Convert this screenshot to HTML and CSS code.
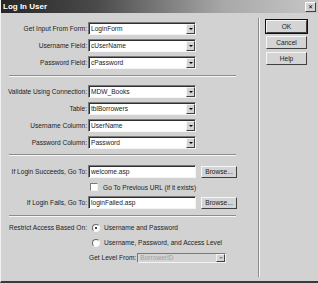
FILE: index.html
```html
<!DOCTYPE html>
<html>
<head>
    <title>Log In User</title>
    <link rel="stylesheet" href="styles.css">
</head>
<body>
    <div class="window">
        <div class="titlebar">
            <span class="title">Log In User</span>
            <span class="close">&#x2715;</span>
        </div>
        <div class="content">
            <div class="main">
                <div class="section first">
                    <div class="row">
                        <label>Get Input From Form:</label>
                        <div class="select"><span>LoginForm</span><i class="arrow"></i></div>
                    </div>
                    <div class="row">
                        <label>Username Field:</label>
                        <div class="select"><span>cUserName</span><i class="arrow"></i></div>
                    </div>
                    <div class="row">
                        <label>Password Field:</label>
                        <div class="select"><span>cPassword</span><i class="arrow"></i></div>
                    </div>
                </div>
                <div class="sep sep1"></div>
                <div class="section">
                    <div class="row">
                        <label>Validate Using Connection:</label>
                        <div class="select"><span>MDW_Books</span><i class="arrow"></i></div>
                    </div>
                    <div class="row">
                        <label>Table:</label>
                        <div class="select"><span>tblBorrowers</span><i class="arrow"></i></div>
                    </div>
                    <div class="row">
                        <label>Username Column:</label>
                        <div class="select"><span>UserName</span><i class="arrow"></i></div>
                    </div>
                    <div class="row">
                        <label>Password Column:</label>
                        <div class="select"><span>Password</span><i class="arrow"></i></div>
                    </div>
                </div>
                <div class="sep sep2"></div>
                <div class="section">
                    <div class="row">
                        <label>If Login Succeeds, Go To:</label>
                        <div class="textbox">welcome.asp</div>
                        <button class="browse">Browse...</button>
                    </div>
                    <div class="row check-row">
                        <span class="checkbox"></span>
                        <span class="check-label">Go To Previous URL (if it exists)</span>
                    </div>
                    <div class="row">
                        <label>If Login Fails, Go To:</label>
                        <div class="textbox">loginFailed.asp</div>
                        <button class="browse">Browse...</button>
                    </div>
                </div>
                <div class="sep sep3"></div>
                <div class="section">
                    <div class="row small">
                        <label>Restrict Access Based On:</label>
                        <span class="radio checked"></span>
                        <span class="radio-label">Username and Password</span>
                    </div>
                    <div class="row small">
                        <label></label>
                        <span class="radio"></span>
                        <span class="radio-label">Username, Password, and Access Level</span>
                    </div>
                    <div class="row small">
                        <span class="level-label">Get Level From:</span>
                        <div class="select disabled"><span>BorrowerID</span><i class="arrow"></i></div>
                    </div>
                </div>
            </div>
            <div class="vsep"></div>
            <div class="buttons">
                <button class="btn default">OK</button>
                <button class="btn">Cancel</button>
                <button class="btn">Help</button>
            </div>
        </div>
    </div>
</body>
</html>
```

FILE: styles.css
```css
body {
  margin: 0;
  padding: 0;
  font-family: "Liberation Sans", Arial, sans-serif;
  font-size: 6.6px;
  color: #222222;
  background-color: #d2d2d2;
  white-space: nowrap;
}

.window {
  width: 318px;
  height: 283px;
  box-sizing: border-box;
  background-color: #d2d2d2;
  border-left: 1px solid #f2f2f2;
  border-bottom: 2px solid #3a3a3a;
  display: flex;
  flex-direction: column;
}

.titlebar {
  height: 13px;
  display: flex;
  align-items: center;
  justify-content: space-between;
  padding: 0 2px 0 2px;
  background: linear-gradient(to right, #262626 0%, #4a4a4a 30%, #a8a8a8 70%, #c6c6c6 100%);
}

.title {
  color: #ffffff;
  font-weight: bold;
  font-size: 8px;
}

.close {
  width: 9px;
  height: 8px;
  font-size: 6px;
  line-height: 8px;
  text-align: center;
  background-color: #d4d4d4;
  border: 1px solid;
  border-color: #ffffff #404040 #404040 #ffffff;
  color: #000000;
}

.content {
  flex: 1;
  display: flex;
}

.main {
  width: 248px;
  padding-left: 7px;
}

.section.first {
  margin-top: 7px;
}

.row {
  display: flex;
  align-items: center;
  height: 17px;
}

.row.small {
  height: 15px;
}

.row label {
  width: 79px;
  display: flex;
  justify-content: flex-end;
  padding-right: 1px;
  flex-shrink: 0;
}

.select,
.textbox {
  width: 108px;
  height: 13px;
  box-sizing: border-box;
  background-color: #ffffff;
  border: 1px solid;
  border-color: #7a7a7a #f4f4f4 #f4f4f4 #7a7a7a;
  box-shadow: inset 1px 1px 0 #303030;
  display: flex;
  align-items: center;
  padding-left: 2px;
}

.select span {
  flex: 1;
}

.arrow {
  width: 9px;
  height: 10px;
  box-sizing: border-box;
  background-color: #d4d4d4;
  border: 1px solid;
  border-color: #f4f4f4 #404040 #404040 #f4f4f4;
  display: flex;
  align-items: center;
  justify-content: center;
}

.arrow::after {
  content: "";
  border-left: 2px solid transparent;
  border-right: 2px solid transparent;
  border-top: 2px solid #000000;
}

.select.disabled {
  width: 89px;
  height: 10px;
  background-color: #d4d4d4;
  color: #a0a0a0;
  box-shadow: none;
}

.select.disabled .arrow {
  height: 8px;
}

.select.disabled .arrow::after {
  border-top-color: #8a8a8a;
}

.level-label {
  margin-left: 81px;
  padding-right: 1px;
}

.sep {
  width: 227px;
  height: 0;
  border-top: 1px solid #8c8c8c;
  border-bottom: 1px solid #f6f6f6;
}

.sep1 {
  margin: 4px 0 6px 1px;
}

.sep2 {
  margin: 3px 0 7px 1px;
}

.sep3 {
  margin: 4px 0 3px 1px;
}

.browse {
  margin-left: 5px;
  width: 36px;
  height: 12px;
  padding: 0;
  font-family: "Liberation Sans", Arial, sans-serif;
  font-size: 6.6px;
  color: #222222;
  background-color: #d4d4d4;
  border: 1px solid;
  border-color: #f6f6f6 #404040 #404040 #f6f6f6;
}

.check-row {
  height: 14px;
  padding-left: 82px;
}

.checkbox {
  width: 6px;
  height: 6px;
  background-color: #ffffff;
  border: 1px solid;
  border-color: #7a7a7a #f4f4f4 #f4f4f4 #7a7a7a;
  margin-right: 5px;
}

.radio {
  width: 6px;
  height: 6px;
  border-radius: 50%;
  background-color: #ffffff;
  border: 1px solid;
  border-color: #6a6a6a #f4f4f4 #f4f4f4 #6a6a6a;
  margin-left: 4px;
  margin-right: 4px;
  display: flex;
  align-items: center;
  justify-content: center;
}

.radio.checked::after {
  content: "";
  width: 2px;
  height: 2px;
  border-radius: 50%;
  background-color: #000000;
}

.vsep {
  width: 0;
  margin: 5px 0 4px 2px;
  border-left: 1px solid #8c8c8c;
  border-right: 1px solid #f6f6f6;
}

.buttons {
  padding-left: 6px;
  padding-top: 7px;
  display: flex;
  flex-direction: column;
  gap: 3px;
}

.btn {
  width: 41px;
  height: 13px;
  padding: 0;
  font-family: "Liberation Sans", Arial, sans-serif;
  font-size: 6.6px;
  color: #222222;
  background-color: #d4d4d4;
  border: 1px solid;
  border-color: #f6f6f6 #404040 #404040 #f6f6f6;
}

.btn.default {
  outline: 1px solid #111111;
}
```
